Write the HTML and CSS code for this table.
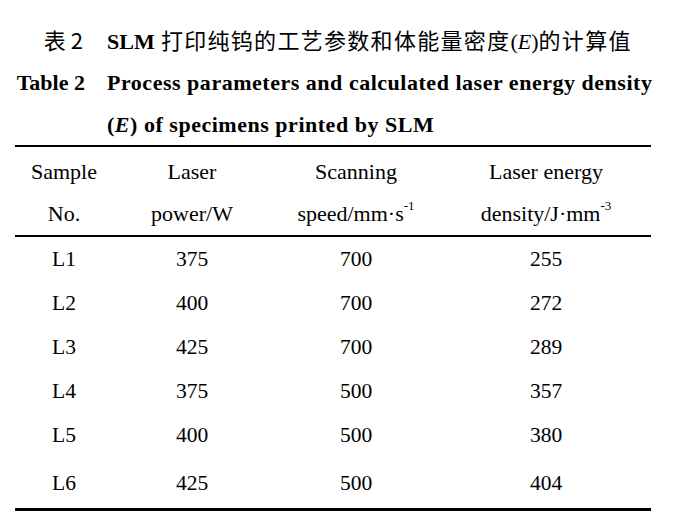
FILE: index.html
```html
<!DOCTYPE html>
<html lang="zh">
<head>
<meta charset="utf-8">
<link rel="stylesheet" href="styles.css">
</head>
<body>
<div class="page">
  <div class="caption">
    <div class="cap-label zh r1">表 2</div>
    <div class="cap-text zh r1"><b class="en">SLM</b> 打印纯钨的工艺参数和体能量密度<span class="en">(<i>E</i>)</span>的计算值</div>
    <div class="cap-label en-b r2">Table 2</div>
    <div class="cap-text en-b r2">Process parameters and calculated laser energy density</div>
    <div class="cap-label r3"></div>
    <div class="cap-text en-b r3">(<i>E</i>) of specimens printed by SLM</div>
  </div>
  <table class="data">
    <colgroup>
      <col class="c1"><col class="c2"><col class="c3"><col class="c4">
    </colgroup>
    <thead>
      <tr>
        <th>Sample<br>No.</th>
        <th>Laser<br>power/W</th>
        <th>Scanning<br>speed/mm·s<sup>-1</sup></th>
        <th>Laser energy<br>density/J·mm<sup>-3</sup></th>
      </tr>
    </thead>
    <tbody>
      <tr><td>L1</td><td>375</td><td>700</td><td>255</td></tr>
      <tr><td>L2</td><td>400</td><td>700</td><td>272</td></tr>
      <tr><td>L3</td><td>425</td><td>700</td><td>289</td></tr>
      <tr><td>L4</td><td>375</td><td>500</td><td>357</td></tr>
      <tr><td>L5</td><td>400</td><td>500</td><td>380</td></tr>
      <tr class="last"><td>L6</td><td>425</td><td>500</td><td>404</td></tr>
    </tbody>
  </table>
</div>
</body>
</html>
```
FILE: styles.css
```css
html, body {
  margin: 0;
  padding: 0;
  background: #ffffff;
  color: #000000;
}
.page {
  width: 682px;
  padding-top: 17px;
  font-family: "Liberation Serif", "Times New Roman", serif;
}
.caption {
  display: grid;
  grid-template-columns: 85px 1fr;
  column-gap: 22px;
}
.cap-label {
  text-align: right;
  white-space: nowrap;
}
.cap-text {
  white-space: nowrap;
}
.r1 { height: 45px; line-height: 45px; }
.r2 { height: 42px; line-height: 42px; }
.r3 { height: 41px; line-height: 41px; }
.zh {
  font-family: "Noto Sans CJK SC", "Liberation Serif", sans-serif;
  font-size: 22px;
  letter-spacing: 1.3px;
}
.cap-label.zh {
  letter-spacing: 0;
  padding-right: 2px;
}
.zh .en, .zh b {
  font-family: "Liberation Serif", serif;
  letter-spacing: 0;
}
.zh b.en {
  font-weight: bold;
}
.en-b {
  font-family: "Liberation Serif", serif;
  font-weight: bold;
  font-size: 22px;
}
.cap-text.en-b {
  letter-spacing: 0.52px;
}
.caption i {
  font-style: italic;
}
.data {
  margin-left: 15px;
  width: 636px;
  border-collapse: collapse;
  font-family: "Liberation Serif", serif;
  font-size: 21.5px;
}
.c1 { width: 98px; }
.c2 { width: 158px; }
.c3 { width: 170px; }
.c4 { width: 210px; }
.data thead tr {
  border-top: 2px solid #000;
  border-bottom: 2px solid #000;
}
.data th {
  font-weight: normal;
  font-size: 22px;
  text-align: center;
  line-height: 42px;
  padding: 4px 0 0 0;
  white-space: nowrap;
}
.data td {
  text-align: center;
  height: 44px;
  padding: 0;
  line-height: 44px;
}
.data tr.last td {
  height: 51px;
}
.data tbody tr.last {
  border-bottom: 3px solid #000;
}
.data sup {
  font-size: 13px;
  vertical-align: 0;
  position: relative;
  top: -11px;
  line-height: 0;
}
```
